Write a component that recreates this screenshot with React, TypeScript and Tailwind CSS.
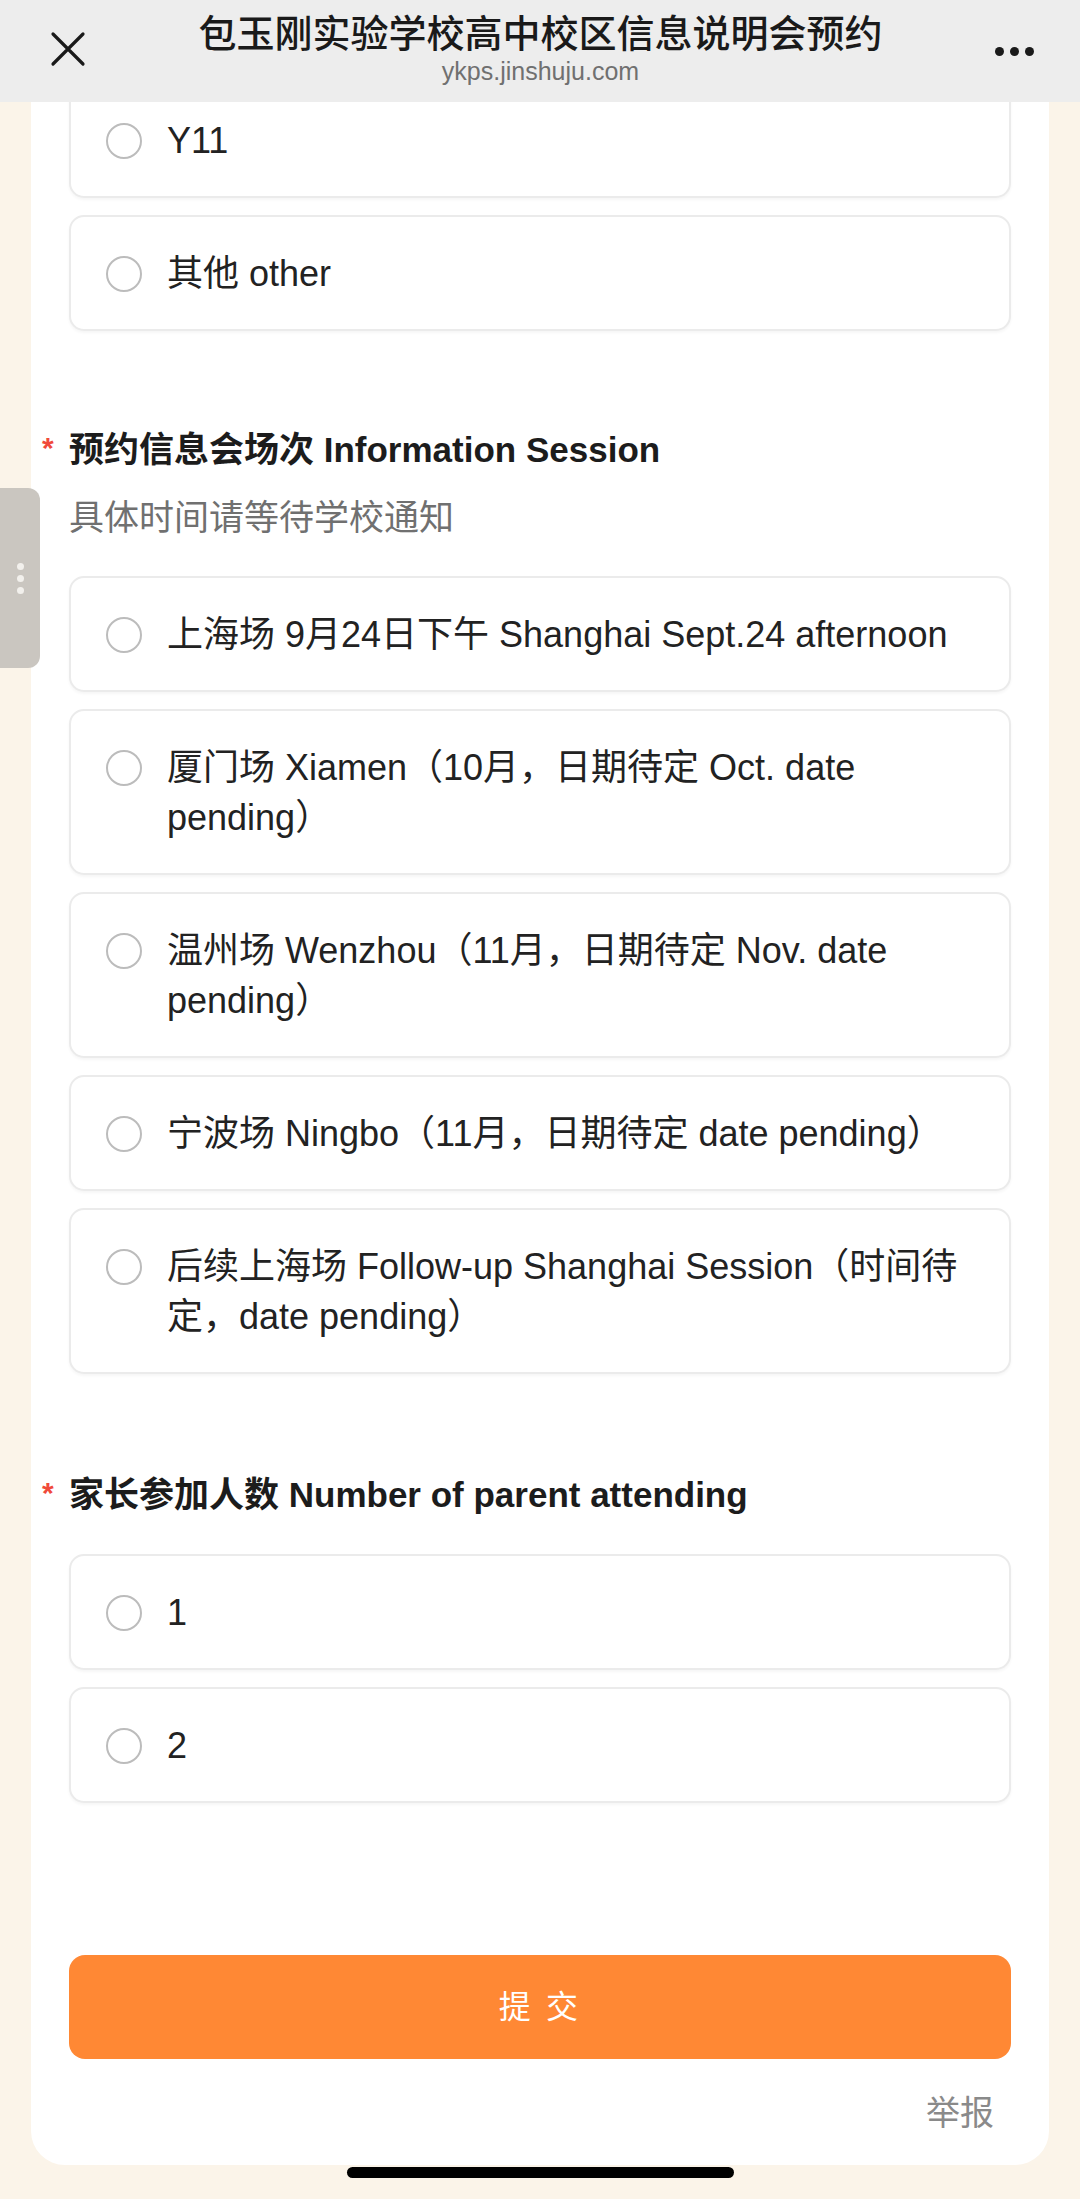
import React from 'react';

const FONT = { fontFamily: '"Liberation Sans", "Noto Sans CJK SC", sans-serif' };

function Radio() {
  return <span className="mt-[7px] h-[36px] w-[36px] flex-shrink-0 rounded-full border-2 border-[#bcbcbc] bg-white" />;
}

function Option({ label, first }: { label: string; first?: boolean }) {
  return (
    <div
      className={`flex items-start gap-[25px] rounded-[15px] border-2 border-[#ebebeb] bg-white pl-[35px] pr-[40px] pt-[32px] pb-[30px] shadow-[0_2px_3px_rgba(0,0,0,0.04)] ${
        first ? '-mt-[20px]' : ''
      }`}
    >
      <Radio />
      <span className="text-[36px] leading-[50px] text-[#222]">{label}</span>
    </div>
  );
}

function Title({ text }: { text: string }) {
  return (
    <div className="-ml-[27px] flex items-center">
      <span className="w-[27px] -mt-[4px] text-[30px] font-bold leading-[50px] text-[#f04a3a]">*</span>
      <span className="text-[35px] font-bold leading-[50px] text-[#1c1c1c]">{text}</span>
    </div>
  );
}

export default function App() {
  return (
    <div className="relative h-[2199px] overflow-hidden bg-[#fbf4e9]" style={FONT}>
      {/* Browser toolbar */}
      <div className="relative z-10 flex h-[102px] items-center justify-between bg-[#ededed] px-[50px]">
        <svg width="36" height="36" viewBox="0 0 36 36" className="-mt-[4px]">
          <path d="M3 3 L33 33 M33 3 L3 33" stroke="#1a1a1a" strokeWidth="3.2" strokeLinecap="round" />
        </svg>
        <div className="-mt-[4px] flex flex-col items-center">
          <span className="text-[38px] font-medium leading-[44px] text-[#1a1a1a]">包玉刚实验学校高中校区信息说明会预约</span>
          <span className="text-[25px] leading-[30px] text-[#707070]">ykps.jinshuju.com</span>
        </div>
        <div className="-mr-[4px] flex gap-[6px]">
          <span className="h-[9px] w-[9px] rounded-full bg-[#1a1a1a]" />
          <span className="h-[9px] w-[9px] rounded-full bg-[#1a1a1a]" />
          <span className="h-[9px] w-[9px] rounded-full bg-[#1a1a1a]" />
        </div>
      </div>

      {/* Form panel */}
      <div className="mx-[31px] overflow-hidden rounded-b-[34px] bg-white px-[38px] pb-[27px]">
        <div className="flex flex-col gap-[17px]">
          <Option label="Y11" first />
          <Option label="其他 other" />
        </div>

        <div className="mt-[94px]">
          <Title text="预约信息会场次 Information Session" />
          <p className="mt-[18px] text-[35px] leading-[50px] text-[#707070]">具体时间请等待学校通知</p>
          <div className="mt-[33px] flex flex-col gap-[17px]">
            <Option label="上海场 9月24日下午 Shanghai Sept.24 afternoon" />
            <Option label="厦门场 Xiamen（10月，日期待定 Oct. date pending）" />
            <Option label="温州场 Wenzhou（11月，日期待定 Nov. date pending）" />
            <Option label="宁波场 Ningbo（11月，日期待定 date pending）" />
            <Option label="后续上海场 Follow-up Shanghai Session（时间待定，date pending）" />
          </div>
        </div>

        <div className="mt-[96px]">
          <Title text="家长参加人数 Number of parent attending" />
          <div className="mt-[34px] flex flex-col gap-[17px]">
            <Option label="1" />
            <Option label="2" />
          </div>
        </div>

        <button className="mt-[152px] flex h-[104px] w-full items-center justify-center rounded-[16px] bg-[#ff8834] text-[32px] tracking-[0.1em] text-white">
          提 交
        </button>

        <div className="mt-[29px] flex justify-end pr-[17px]">
          <span className="text-[34px] leading-[50px] text-[#8a8a8a]">举报</span>
        </div>
      </div>

      {/* Home indicator */}
      <div className="mt-[2px] flex justify-center">
        <span className="h-[11px] w-[387px] rounded-full bg-black" />
      </div>

      {/* Side handle */}
      <div className="absolute left-0 top-[488px] flex h-[180px] w-[40px] flex-col items-center justify-center gap-[5px] rounded-r-[12px] bg-[#cac6c0]">
        <span className="h-[7px] w-[7px] rounded-full bg-[#f2f0ec]" />
        <span className="h-[7px] w-[7px] rounded-full bg-[#f2f0ec]" />
        <span className="h-[7px] w-[7px] rounded-full bg-[#f2f0ec]" />
      </div>
    </div>
  );
}
